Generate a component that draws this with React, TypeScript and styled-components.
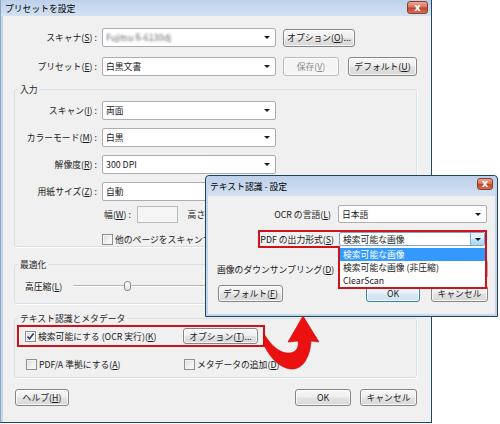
import React from 'react';
import styled, { css, createGlobalStyle } from 'styled-components';

const GlobalStyle = createGlobalStyle`
  html, body {
    margin: 0;
    padding: 0;
    background: #fff;
  }
  body {
    font-family: 'Noto Sans CJK JP', 'Noto Sans', sans-serif;
    font-size: 8.8px;
    line-height: 11px;
    color: #1a1a1a;
  }
`;

// mnemonic letter in parentheses, e.g. (S)
const Key: React.FC<{ k: string }> = ({ k }) => (
  <>
    (<u>{k}</u>)
  </>
);

const App: React.FC = () => {
  return (
    <Desktop>
      <GlobalStyle />
      <MainWindow>
        <TitleBar $h={16} $pl={4} $pr={3}>
          <Title>プリセットを設定</Title>
          <CloseButton $w={21} $h={13} $top={1}>x</CloseButton>
        </TitleBar>
        <MainBody>
          <Row $mt={12}>
            <FieldLabel $w={94}>
              スキャナ<Key k="S" />&nbsp;:
            </FieldLabel>
            <Combo $w={174} $ml={5}>
              <ComboValue>
                <Blurred>Fujitsu fi-6130dj</Blurred>
              </ComboValue>
              <ComboArrow />
            </Combo>
            <Button $w={72} $h={18} $ml={7}>
              オプション<Key k="O" />...
            </Button>
          </Row>
          <Row $mt={10}>
            <FieldLabel $w={94}>
              プリセット<Key k="E" />&nbsp;:
            </FieldLabel>
            <Combo $w={174} $ml={5}>
              <ComboValue>白黒文書</ComboValue>
              <ComboArrow />
            </Combo>
            <Button $w={56} $h={19} $ml={7} $off>
              保存<Key k="V" />
            </Button>
            <Button $w={69} $h={19} $ml={9}>
              デフォルト<Key k="U" />
            </Button>
          </Row>

          <Group $mt={7}>
            <GroupTitle>入力</GroupTitle>
            <GroupBody $pt={5} $pb={0}>
              <Row>
                <FieldLabel $w={82}>
                  スキャン<Key k="I" />&nbsp;:
                </FieldLabel>
                <Combo $w={174} $ml={5}>
                  <ComboValue>両面</ComboValue>
                  <ComboArrow />
                </Combo>
              </Row>
              <Row $mt={8}>
                <FieldLabel $w={82}>
                  カラーモード<Key k="M" />&nbsp;:
                </FieldLabel>
                <Combo $w={174} $ml={5}>
                  <ComboValue>白黒</ComboValue>
                  <ComboArrow />
                </Combo>
              </Row>
              <Row $mt={8}>
                <FieldLabel $w={82}>
                  解像度<Key k="R" />&nbsp;:
                </FieldLabel>
                <Combo $w={174} $ml={5}>
                  <ComboValue>300 DPI</ComboValue>
                  <ComboArrow />
                </Combo>
              </Row>
              <Row $mt={8}>
                <FieldLabel $w={82}>
                  用紙サイズ<Key k="Z" />&nbsp;:
                </FieldLabel>
                <Combo $w={174} $ml={5}>
                  <ComboValue>自動</ComboValue>
                  <ComboArrow />
                </Combo>
              </Row>
              <Row $mt={5} $h={17}>
                <FieldLabel $w={116}>
                  幅<Key k="W" />&nbsp;:
                </FieldLabel>
                <TextBox $ml={6} />
                <FieldLabel $w={44}>
                  高さ<Key k="H" />&nbsp;:
                </FieldLabel>
                <TextBox $ml={6} />
              </Row>
              <Row $mt={10} $h={13} $pl={87}>
                <Check />
                <span>他のページをスキャンするメッセージを表示<Key k="P" /></span>
              </Row>
            </GroupBody>
          </Group>

          <Group $mt={11}>
            <GroupTitle>最適化</GroupTitle>
            <GroupBody $pt={8} $pb={10}>
              <Row $h={14} $pl={10}>
                <FieldLabel $w={42} $left>
                  高圧縮<Key k="L" />
                </FieldLabel>
                <Slider>
                  <SliderThumb style={{ left: 51 }} />
                </Slider>
              </Row>
            </GroupBody>
          </Group>

          <Group $mt={8}>
            <GroupTitle>テキスト認識とメタデータ</GroupTitle>
            <GroupBody $pt={0} $pb={6}>
              <HighlightRow>
                <Check $on />
                <span>
                  検索可能にする (OCR 実行)<Key k="K" />
                </span>
                <Button $w={75} $h={16} $ml={0} $auto>
                  オプション<Key k="T" />...
                </Button>
              </HighlightRow>
              <Row $mt={11} $h={13} $pl={11}>
                <CheckItem $w={158}>
                  <Check />
                  <span>
                    PDF/A 準拠にする<Key k="A" />
                  </span>
                </CheckItem>
                <CheckItem>
                  <Check />
                  <span>
                    メタデータの追加<Key k="D" />
                  </span>
                </CheckItem>
              </Row>
            </GroupBody>
          </Group>

          <ButtonBar>
            <Button $w={54} $h={17}>
              ヘルプ<Key k="H" />
            </Button>
            <Button $w={56} $h={17} $auto>
              OK
            </Button>
            <Button $w={57} $h={17} $ml={9}>
              キャンセル
            </Button>
          </ButtonBar>
        </MainBody>
      </MainWindow>

      <OcrWindow>
        <TitleBar $h={20} $pl={2} $pr={2}>
          <Title>テキスト認識 - 設定</Title>
          <CloseButton $w={16} $h={12} $top={2}>x</CloseButton>
        </TitleBar>
        <OcrBody>
          <Row $h={18}>
            <FieldLabel $w={114}>
              OCR の言語<Key k="L" />
            </FieldLabel>
            <Combo $w={149} $h={18} $ml={7}>
              <ComboValue>日本語</ComboValue>
              <ComboArrow />
            </Combo>
          </Row>
          <Highlight>
            <FieldLabel $w={74}>
              PDF の出力形式<Key k="S" />
            </FieldLabel>
            <Combo $w={146} $h={14} $ml={5} $focus>
              <ComboValue>検索可能な画像</ComboValue>
              <ComboArrow $hot />
            </Combo>
            <DropList>
              <DropItem $selected>検索可能な画像</DropItem>
              <DropItem>検索可能な画像 (非圧縮)</DropItem>
              <DropItem>ClearScan</DropItem>
            </DropList>
          </Highlight>
          <Row $mt={12} $h={18}>
            <span>
              画像のダウンサンプリング<Key k="D" />
            </span>
            <Combo $w={149} $h={18} $auto>
              <ComboValue>なし</ComboValue>
              <ComboArrow />
            </Combo>
          </Row>
          <Row $mt={7} $h={17} $pl={1}>
            <Button $w={65} $h={17}>
              デフォルト<Key k="F" />
            </Button>
            <Button $w={54} $h={17} $auto $primary>
              OK
            </Button>
            <Button $w={57} $h={17} $ml={11}>
              キャンセル
            </Button>
          </Row>
        </OcrBody>
      </OcrWindow>

      <Pointer viewBox="0 0 70 65" width={70} height={65}>
        <path
          d="M48 6 L64 32 L56 31 C55 48 47 60 36 59 C25 58 15 48 9 35 L9 24 C17 37 26 44 35 43 C42 42 44 37 43 31 L33 32 Z"
          fill="#ec1111"
          stroke="#c40000"
          strokeWidth={0.6}
        />
      </Pointer>
    </Desktop>
  );
};

export default App;

const Desktop = styled.div`
  position: relative;
  width: 500px;
  height: 424px;
  overflow: hidden;
  background: #fff;
`;

const Window = styled.div`
  box-sizing: border-box;
  display: flex;
  flex-direction: column;
  background: #c4d6ec;
`;

const MainWindow = styled(Window)`
  width: 432px;
  height: 423px;
  border-left: 1px solid #8ea6c0;
  border-right: 1px solid #1b4a62;
  border-bottom: 1px solid #1b4a62;
`;

const OcrWindow = styled(Window)`
  position: absolute;
  left: 205px;
  top: 175px;
  width: 293px;
  height: 142px;
  border: 1px solid #1e4459;
  border-radius: 4px 4px 0 0;
  padding: 0 2px 2px;
  z-index: 1;
`;

const TitleBar = styled.div<{ $h: number; $pl: number; $pr: number }>`
  flex: none;
  height: ${p => p.$h}px;
  display: flex;
  align-items: center;
  justify-content: space-between;
  padding: 0 ${p => p.$pr}px 0 ${p => p.$pl}px;
  background: linear-gradient(180deg, #bcd0e9 0%, #c9daef 55%, #d3e1f2 100%);
`;

const Title = styled.span`
  color: #000;
  white-space: nowrap;
`;

const CloseButton = styled.div<{ $w: number; $h: number; $top: number }>`
  align-self: flex-start;
  margin-top: ${p => p.$top}px;
  box-sizing: border-box;
  width: ${p => p.$w}px;
  height: ${p => p.$h}px;
  display: flex;
  align-items: center;
  justify-content: center;
  border: 1px solid #8a3b2c;
  border-radius: 3px;
  background: linear-gradient(180deg, #eaa898 0%, #d9735c 45%, #c5442b 55%, #d56f58 100%);
  color: #fff;
  font: bold 10px 'DejaVu Sans', sans-serif;
  line-height: 1;
`;

const MainBody = styled.div`
  flex: 1;
  min-height: 0;
  margin-left: 2px;
  display: flex;
  flex-direction: column;
  background: #f0f0f0;
`;

const OcrBody = styled.div`
  flex: 1;
  min-height: 0;
  display: flex;
  flex-direction: column;
  padding: 9px 7px 0 9px;
  background: #f0f0f0;
`;

const Row = styled.div<{ $mt?: number; $h?: number; $pl?: number }>`
  flex: none;
  display: flex;
  align-items: center;
  height: ${p => p.$h ?? 19}px;
  margin-top: ${p => p.$mt ?? 0}px;
  padding-left: ${p => p.$pl ?? 0}px;
  white-space: nowrap;
`;

const FieldLabel = styled.span<{ $w: number; $left?: boolean }>`
  flex: none;
  width: ${p => p.$w}px;
  text-align: ${p => (p.$left ? 'left' : 'right')};
  white-space: nowrap;
`;

const Combo = styled.div<{ $w: number; $h?: number; $ml?: number; $auto?: boolean; $focus?: boolean }>`
  flex: none;
  box-sizing: border-box;
  width: ${p => p.$w}px;
  height: ${p => p.$h ?? 19}px;
  margin-left: ${p => (p.$auto ? 'auto' : `${p.$ml ?? 0}px`)};
  display: flex;
  align-items: center;
  padding-left: 3px;
  background: #fff;
  border: 1px solid ${p => (p.$focus ? '#7da2ce' : '#abadb3')};
  border-radius: 2px;
  overflow: hidden;
  white-space: nowrap;
`;

const ComboValue = styled.span`
  flex: 1;
  overflow: hidden;
`;

const ComboArrow = styled.span<{ $hot?: boolean }>`
  flex: none;
  align-self: stretch;
  width: 14px;
  margin-right: 1px;
  display: flex;
  align-items: center;
  justify-content: center;

  &::after {
    content: '';
    border-left: 3px solid transparent;
    border-right: 3px solid transparent;
    border-top: 3px solid #1a1a1a;
  }

  ${p =>
    p.$hot &&
    css`
      margin-right: 0;
      box-sizing: border-box;
      border-left: 1px solid #7da2ce;
      background: linear-gradient(180deg, #eaf6fd 0%, #d9f0fc 50%, #bee6fd 51%, #a7d9f5 100%);
    `}
`;

const Blurred = styled.span`
  color: #6a6a6a;
  filter: blur(1.2px);
`;

const Button = styled.button<{
  $w: number;
  $h?: number;
  $ml?: number;
  $auto?: boolean;
  $off?: boolean;
  $primary?: boolean;
}>`
  flex: none;
  box-sizing: border-box;
  width: ${p => p.$w}px;
  height: ${p => p.$h ?? 17}px;
  margin: 0 0 0 ${p => (p.$auto ? 'auto' : `${p.$ml ?? 0}px`)};
  padding: 0;
  display: flex;
  align-items: center;
  justify-content: center;
  font: inherit;
  white-space: nowrap;
  border: 1px solid ${p => (p.$off ? '#b8bcbf' : p.$primary ? '#3c7fb1' : '#868686')};
  border-radius: 3px;
  color: ${p => (p.$off ? '#8c8c8c' : '#1a1a1a')};
  background: ${p =>
    p.$off
      ? '#f4f4f4'
      : p.$primary
        ? 'linear-gradient(180deg, #f2f8fc 0%, #e8f2f9 48%, #d9e8f3 52%, #cfe2f0 100%)'
        : 'linear-gradient(180deg, #f7f7f7 0%, #eeeeee 48%, #e2e2e2 52%, #d8d8d8 100%)'};
  box-shadow: inset 0 0 0 1px rgba(255, 255, 255, 0.75);
`;

const Group = styled.fieldset<{ $mt: number }>`
  flex: none;
  min-width: 0;
  margin: ${p => p.$mt}px 14px 0 11px;
  padding: 0;
  border: 1px solid #d5dfe5;
  border-radius: 3px;
  box-shadow: 1px 1px 0 #fff;
`;

const GroupTitle = styled.legend`
  margin-left: 3px;
  padding: 0 2px;
  height: 13px;
  line-height: 13px;
  color: #1e1e1e;
`;

const GroupBody = styled.div<{ $pt: number; $pb: number }>`
  display: flex;
  flex-direction: column;
  padding: ${p => p.$pt}px 0 ${p => p.$pb}px;
`;

const TextBox = styled.span<{ $ml: number }>`
  flex: none;
  box-sizing: border-box;
  width: 41px;
  height: 17px;
  margin: 0 0 0 ${p => p.$ml}px;
  border: 1px solid #b9bdc1;
  background: #f5f5f5;
`;

const CheckBox = styled.span`
  flex: none;
  box-sizing: border-box;
  width: 11px;
  height: 11px;
  margin-right: 2px;
  display: flex;
  align-items: center;
  justify-content: center;
  border: 1px solid #8e8f8f;
  background: linear-gradient(135deg, #d9d9d9 0%, #f2f2f2 60%, #fcfcfc 100%);
  box-shadow: inset 0 0 0 1px #f3f3f3;
`;

const Check: React.FC<{ $on?: boolean }> = ({ $on }) => (
  <CheckBox>
    {$on && (
      <svg width="9" height="9" viewBox="0 0 9 9">
        <path d="M1.5 4.6 L3.6 6.8 L7.6 1.6" fill="none" stroke="#2e3f7c" strokeWidth="1.6" />
      </svg>
    )}
  </CheckBox>
);

const CheckItem = styled.span<{ $w?: number }>`
  flex: none;
  display: flex;
  align-items: center;
  width: ${p => (p.$w ? `${p.$w}px` : 'auto')};
`;

const Slider = styled.div`
  position: relative;
  flex: none;
  width: 330px;
  height: 14px;
  margin-left: 6px;

  &::before {
    content: '';
    position: absolute;
    left: 0;
    right: 0;
    top: 6px;
    height: 1px;
    background: #b4b4b4;
    border-bottom: 1px solid #fff;
  }
`;

const SliderThumb = styled.span`
  position: absolute;
  top: 2px;
  box-sizing: border-box;
  width: 7px;
  height: 10px;
  border: 1px solid #8a8a8a;
  border-radius: 3px;
  background: linear-gradient(180deg, #fff 0%, #e2e2e2 100%);
`;

const HighlightRow = styled.div`
  flex: none;
  box-sizing: border-box;
  display: flex;
  align-items: center;
  width: 248px;
  height: 22px;
  margin-left: 2px;
  padding: 0 5px 0 6px;
  border: 2px solid #d0121b;
  white-space: nowrap;
`;

const Highlight = styled.div`
  position: relative;
  flex: none;
  box-sizing: border-box;
  display: flex;
  align-items: center;
  width: 229px;
  height: 18px;
  margin: 7px 0 0 41px;
  border: 2px solid #d0121b;
  white-space: nowrap;
`;

const DropList = styled.div`
  position: absolute;
  top: 100%;
  right: -2px;
  z-index: 2;
  box-sizing: border-box;
  width: 149px;
  padding-top: 2px;
  border: 2px solid #d0121b;
  border-top: 0;
  background: #fff;
`;

const DropItem = styled.div<{ $selected?: boolean }>`
  height: 13px;
  padding-left: 3px;
  line-height: 13px;
  color: ${p => (p.$selected ? '#fff' : '#1a1a1a')};
  background: ${p => (p.$selected ? '#3399ff' : 'transparent')};
`;

const ButtonBar = styled.div`
  flex: none;
  display: flex;
  align-items: center;
  margin-top: 11px;
  padding: 0 14px 0 12px;
`;

const Pointer = styled.svg`
  position: absolute;
  left: 255px;
  top: 310px;
  z-index: 3;
`;
